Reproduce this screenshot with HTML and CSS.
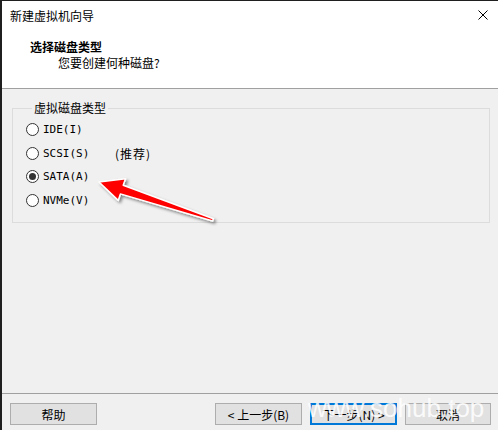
FILE: index.html
```html
<!DOCTYPE html>
<html lang="zh-CN">
<head>
    <meta charset="UTF-8">
    <meta name="viewport" content="width=device-width, initial-scale=1.0">
    <title>新建虚拟机向导</title>
    <link rel="stylesheet" href="styles.css">
</head>
<body>
    <div class="window">
        <div class="header">
            <div class="titlebar">
                <span class="title">新建虚拟机向导</span>
                <svg class="close" width="10" height="10" viewBox="0 0 10 10">
                    <path d="M0.5 0.5 L9.5 9.5 M9.5 0.5 L0.5 9.5" stroke="#000" stroke-width="1" fill="none"/>
                </svg>
            </div>
            <div class="heading">选择磁盘类型</div>
            <div class="subheading">您要创建何种磁盘?</div>
        </div>

        <div class="content">
            <fieldset class="group">
                <legend>虚拟磁盘类型</legend>
                <div class="option"><span class="radio"></span><span class="option-name">IDE(I)</span></div>
                <div class="option"><span class="radio"></span><span class="option-name">SCSI(S)</span><span class="note">(推荐)</span></div>
                <div class="option"><span class="radio checked"></span><span class="option-name">SATA(A)</span></div>
                <div class="option"><span class="radio"></span><span class="option-name">NVMe(V)</span></div>
            </fieldset>
        </div>

        <div class="footer">
            <button class="btn">帮助</button>
            <div class="nav">
                <button class="btn">&lt; 上一步(B)</button>
                <button class="btn focused">下一步(N) &gt;</button>
            </div>
            <button class="btn cancel">取消</button>
        </div>
    </div>

    <!-- red pointer drawn over the dialog -->
    <svg class="arrow" width="498" height="430" viewBox="0 0 498 430">
        <defs>
            <filter id="shadow" x="-20%" y="-50%" width="140%" height="200%">
                <feDropShadow dx="2" dy="2" stdDeviation="1.5" flood-color="#000" flood-opacity="0.45"/>
            </filter>
        </defs>
        <polygon points="99,182 125.5,178.8 123.2,185.3 213.4,218.8 212.6,221 120.4,193.9 118.2,200.4"
                 fill="#f00" stroke="#fff" stroke-width="1.5" stroke-linejoin="round" filter="url(#shadow)"/>
    </svg>

    <div class="watermark">www.sohub.top</div>
</body>
</html>
```

FILE: styles.css
```css
body {
    margin: 0;
    position: relative;
    width: 498px;
    height: 430px;
    overflow: hidden;
    font-family: "Noto Sans CJK SC", "Liberation Sans", sans-serif;
    font-size: 12px;
    color: #000;
}

.window {
    width: 498px;
    height: 430px;
    box-sizing: border-box;
    border-left: 2px solid #1f1f1f;
    border-top: 1px solid #1f1f1f;
    background-color: #f0f0f0;
    display: flex;
    flex-direction: column;
}

/* white wizard header */
.header {
    height: 88px;
    box-sizing: border-box;
    background-color: #fff;
    border-bottom: 1px solid #a0a0a0;
}

.titlebar {
    height: 30px;
    display: flex;
    align-items: center;
    justify-content: space-between;
    padding: 0 10px 0 8px;
}

.title {
    line-height: 30px;
}

.close {
    margin-top: -2px;
}

.heading {
    margin-top: 8px;
    padding-left: 28px;
    line-height: 16px;
    font-weight: bold;
}

.subheading {
    padding-left: 56px;
    line-height: 16px;
}

/* group box */
.content {
    flex: 1;
    padding: 11px 0 0 10px;
}

.group {
    width: 478px;
    height: 123px;
    box-sizing: border-box;
    margin: 0;
    padding: 2px 0 0 13px;
    border: 1px solid #dcdcdc;
}

.group legend {
    margin-left: 6px;
    padding: 0 2px;
    line-height: 16px;
}

.option {
    display: flex;
    align-items: center;
    height: 23.6px;
}

.radio {
    width: 13px;
    height: 13px;
    box-sizing: border-box;
    border: 1px solid #333;
    border-radius: 50%;
    background-color: #fff;
    margin-right: 4px;
    display: flex;
    align-items: center;
    justify-content: center;
}

.radio.checked::after {
    content: "";
    width: 7px;
    height: 7px;
    border-radius: 50%;
    background-color: #333;
}

.option-name {
    width: 72px;
    font-family: "DejaVu Sans Mono", "Noto Sans CJK SC", monospace;
    font-size: 11px;
}

.note {
    letter-spacing: 1px;
}

/* button row */
.footer {
    height: 37px;
    box-sizing: border-box;
    border-top: 1px solid #a0a0a0;
    padding: 9px 7px 0 8px;
    display: flex;
    align-items: flex-start;
}

.nav {
    margin-left: auto;
    display: flex;
    gap: 8px;
}

.btn {
    width: 87px;
    height: 22px;
    box-sizing: border-box;
    padding: 0;
    border: 1px solid #adadad;
    background-color: #e1e1e1;
    font-family: "Noto Sans CJK SC", "Liberation Sans", sans-serif;
    font-size: 12px;
    color: #000;
}

.btn.focused {
    border: 2px solid #0078d7;
}

.btn.cancel {
    margin-left: 8px;
    width: 86px;
}

.arrow {
    position: absolute;
    top: 0;
    left: 0;
    pointer-events: none;
}

.watermark {
    position: absolute;
    left: 308px;
    top: 393px;
    font-family: "Liberation Sans", sans-serif;
    font-size: 26px;
    line-height: 30px;
    color: rgba(255, 255, 255, 0.85);
    pointer-events: none;
}
```
